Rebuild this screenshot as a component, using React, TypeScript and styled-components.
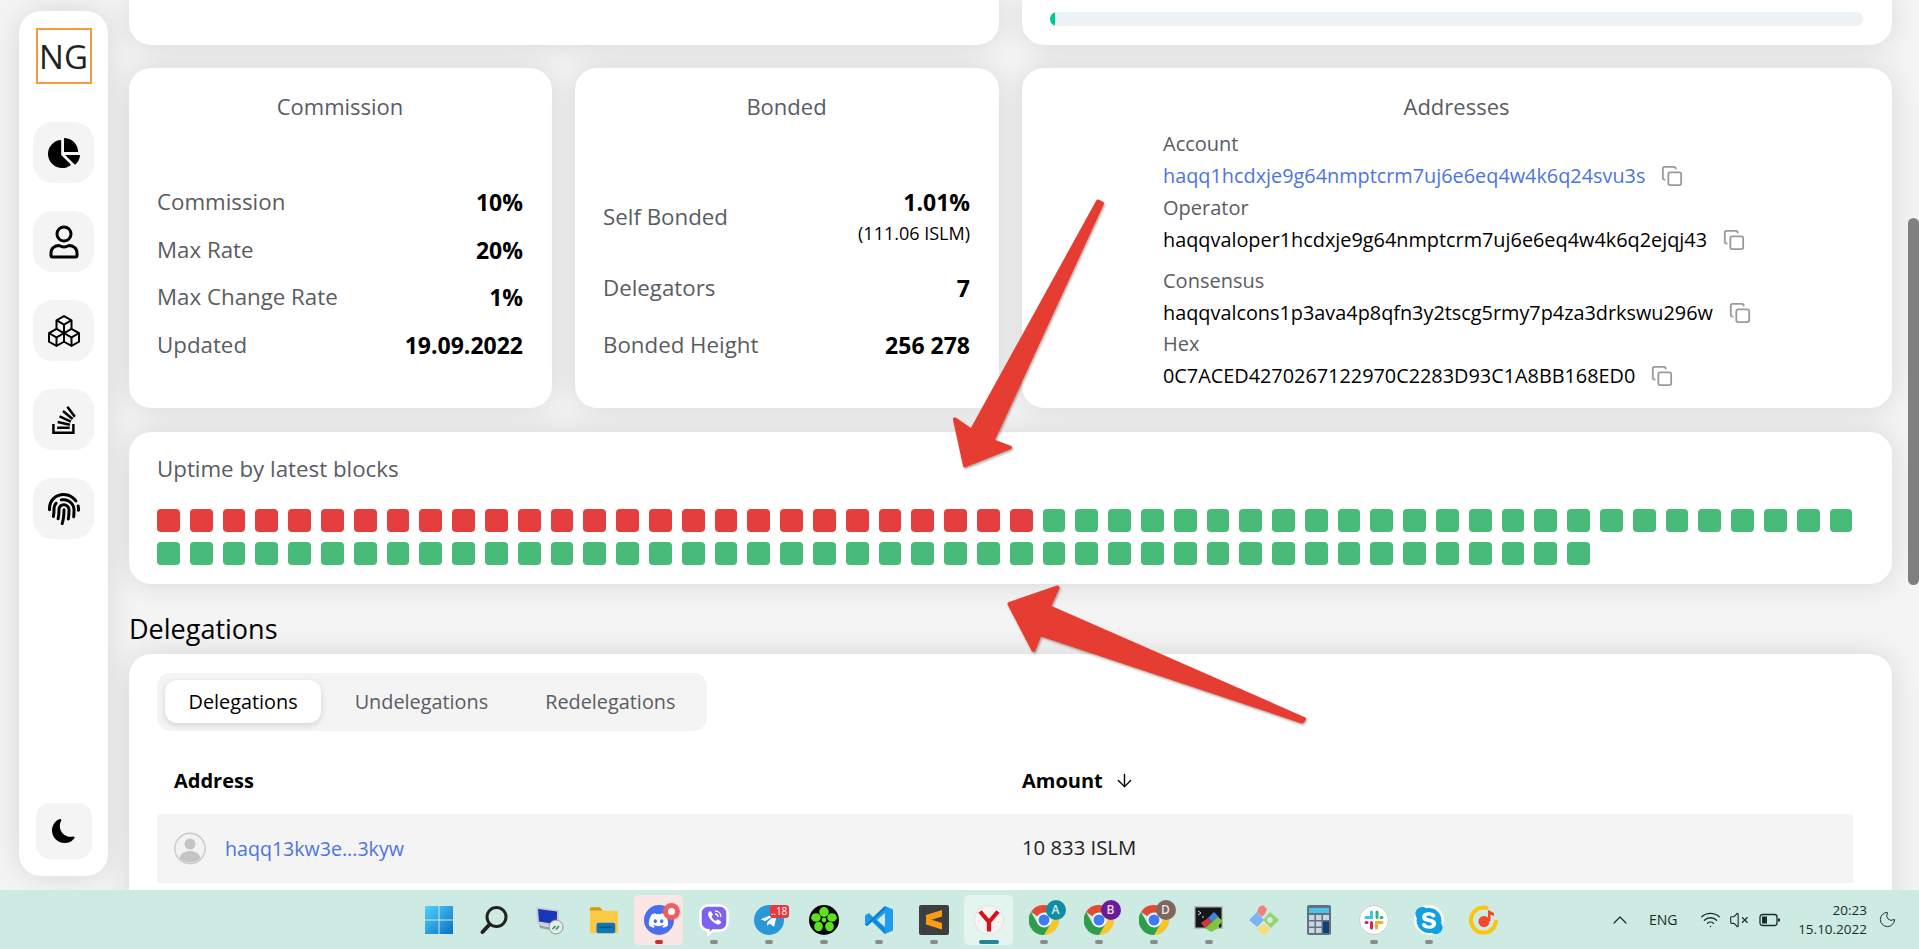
import React from "react";
import styled, { createGlobalStyle } from "styled-components";
import { FaChartPie, FaFingerprint, FaStackOverflow, FaDiscord, FaTelegramPlane, FaSkype } from "react-icons/fa";
import { BsBoxes, BsMoonFill } from "react-icons/bs";
import { ArrowDown, ChevronUp, Copy, Wifi, VolumeX, Moon } from "lucide-react";

const Global = createGlobalStyle`
  html, body { margin: 0; padding: 0; height: 949px; overflow: hidden; background: #f4f4f4; }
  * { box-sizing: border-box; }
  body { font-family: "Open Sans", "Noto Sans", sans-serif; }
`;

const Page = styled.div`
  position: relative;
  width: 1919px;
  height: 949px;
  display: flex;
  flex-direction: column;
  overflow: hidden;
`;
const Main = styled.main`
  display: flex;
  height: 890px;
  overflow: hidden;
  flex: none;
`;
const Sidebar = styled.nav`
  width: 89px;
  height: 865px;
  margin: 11px 0 0 19px;
  padding: 17px 0;
  background: #fff;
  border-radius: 22px;
  box-shadow: 0 0 30px rgba(0, 0, 0, 0.12);
  display: flex;
  flex-direction: column;
  align-items: center;
  flex: none;
`;
const Logo = styled.div`
  width: 56px;
  height: 56px;
  border: 2px solid #f49a3c;
  display: flex;
  align-items: center;
  justify-content: center;
  font-size: 33px;
  font-weight: 500;
  color: #222;
  margin-bottom: 38px;
`;
const NavList = styled.div`
  display: flex;
  flex-direction: column;
  gap: 28px;
`;
const NavButton = styled.div`
  width: 61px;
  height: 61px;
  border-radius: 20px;
  background: #f4f4f4;
  color: #000;
  display: flex;
  align-items: center;
  justify-content: center;
`;
const ThemeButton = styled.div`
  margin-top: auto;
  width: 56px;
  height: 56px;
  border-radius: 14px;
  background: #f4f4f4;
  color: #000;
  display: flex;
  align-items: center;
  justify-content: center;
`;
const Content = styled.div`
  width: 1763px;
  margin-left: 21px;
  flex: none;
  display: flex;
  flex-direction: column;
  & > * {
    flex: none;
  }
`;
const Card = styled.section`
  background: #fff;
  border-radius: 22px;
  box-shadow: 0 0 30px rgba(0, 0, 0, 0.12);
`;
const TopRow = styled.div`
  display: grid;
  grid-template-columns: 870px 870px;
  gap: 23px;
  height: 45px;
  margin-bottom: 23px;
`;
const TopCard = styled(Card)`
  border-radius: 0 0 22px 22px;
  padding: 12px 29px 0 28px;
`;
const Track = styled.div`
  height: 14px;
  border-radius: 7px;
  background: #edf2f7;
  overflow: hidden;
`;
const Fill = styled.div`
  height: 100%;
  background: #00c78f;
  border-radius: 7px 0 0 7px;
`;
const StatsRow = styled.div`
  display: grid;
  grid-template-columns: 423px 424px 870px;
  gap: 23px;
  height: 340px;
  margin-bottom: 24px;
`;
const StatCard = styled(Card)`
  padding: 24px 29px 0 28px;
`;
const CardTitle = styled.h3`
  margin: 0;
  font-size: 22px;
  font-weight: 400;
  line-height: 28px;
  color: #5a5c63;
  text-align: center;
`;
const StatList = styled.div<{ $gap: number }>`
  margin-top: 68px;
  display: flex;
  flex-direction: column;
  gap: ${(p) => p.$gap}px;
`;
const StatRow = styled.div`
  display: flex;
  justify-content: space-between;
  align-items: center;
`;
const StatLabel = styled.span`
  font-size: 22.3px;
  line-height: 28px;
  color: #5a5c63;
`;
const StatValue = styled.div`
  font-size: 23px;
  line-height: 28px;
  font-weight: 700;
  color: #000;
  text-align: right;
`;
const StatSub = styled.div`
  font-size: 18px;
  line-height: 24px;
  margin-top: 5px;
  font-weight: 400;
`;
const AddressList = styled.div`
  margin-top: 10px;
  padding-left: 113px;
`;
const AddressGroup = styled.div<{ $gap: number }>`
  margin-bottom: ${(p) => p.$gap}px;
`;
const AddressLabel = styled.div`
  font-size: 20px;
  line-height: 28px;
  color: #5a5c63;
`;
const AddressValue = styled.div<{ $link?: boolean }>`
  display: flex;
  align-items: center;
  gap: 16px;
  margin-top: 4px;
  font-size: 19.85px;
  line-height: 28px;
  color: ${(p) => (p.$link ? "#4c74e0" : "#000")};
`;
const CopyIcon = styled(Copy)`
  color: #9a9a9a;
  flex: none;
`;
const UptimeCard = styled(Card)`
  padding: 23px 28px 19px;
`;
const UptimeTitle = styled.div`
  font-size: 22.3px;
  line-height: 28px;
  color: #5a5c63;
  margin-bottom: 26px;
`;
const Blocks = styled.div`
  display: flex;
  flex-wrap: wrap;
  row-gap: 10px;
  width: 1710px;
`;
const Block = styled.div<{ $bad?: boolean }>`
  width: 22.8px;
  height: 23px;
  margin-right: 10px;
  border-radius: 4px;
  background: ${(p) => (p.$bad ? "#e53e3e" : "#48bb78")};
`;
const Heading = styled.h2`
  margin: 27px 0 7px;
  font-size: 27px;
  font-weight: 400;
  line-height: 36px;
  color: #000;
`;
const DelegationCard = styled(Card)`
  padding: 19px 39px 0 28px;
  border-radius: 22px 22px 0 0;
  height: 260px;
`;
const Tabs = styled.div`
  display: inline-flex;
  gap: 10px;
  height: 58px;
  padding: 7px 8px;
  border-radius: 14px;
  background: #f4f4f4;
`;
const Tab = styled.div<{ $active?: boolean }>`
  height: 43px;
  padding: 0 23.5px;
  display: flex;
  align-items: center;
  font-size: 19.85px;
  border-radius: 12px;
  color: ${(p) => (p.$active ? "#000" : "#5a5c63")};
  background: ${(p) => (p.$active ? "#fff" : "transparent")};
  box-shadow: ${(p) => (p.$active ? "0 2px 6px rgba(0,0,0,.14)" : "none")};
`;
const TableGrid = styled.div`
  display: grid;
  grid-template-columns: 865px 1fr;
  align-items: center;
`;
const TableHead = styled(TableGrid)`
  margin-top: 35px;
  height: 28px;
  margin-bottom: 20px;
  padding-left: 17px;
  font-size: 20px;
  font-weight: 700;
  color: #000;
`;
const AddressHead = styled.div``;
const AmountHead = styled.div`
  display: flex;
  align-items: center;
  gap: 11px;
  margin-left: -17px;
`;
const TableRow = styled(TableGrid)`
  height: 69px;
  background: #f4f4f4;
  font-size: 20.3px;
  padding-left: 17px;
`;
const PersonCell = styled.div`
  display: flex;
  align-items: center;
  gap: 19px;
  color: #4c74e0;
  font-size: 19.6px;
`;
const AmountCell = styled.div`
  color: #222;
  margin-left: -17px;
  margin-top: -4px;
`;

/* Taskbar */
const Taskbar = styled.footer`
  height: 59px;
  background: #cdebe2;
  display: flex;
  align-items: flex-start;
  padding-left: 411px;
  flex: none;
`;
const Slot = styled.div<{ $bg?: string }>`
  position: relative;
  width: 55px;
  height: 59px;
  padding-top: 15px;
  display: flex;
  flex-direction: column;
  align-items: center;
  &::before {
    content: "";
    display: ${(p) => (p.$bg ? "block" : "none")};
    position: absolute;
    left: 3px;
    top: 5px;
    width: 49px;
    height: 50px;
    border-radius: 5px;
    background: ${(p) => p.$bg};
  }
`;
const SlotIcon = styled.div`
  position: relative;
  width: 30px;
  height: 30px;
  display: flex;
  align-items: center;
  justify-content: center;
`;
const Indicator = styled.div<{ $color?: string; $wide?: boolean }>`
  position: relative;
  width: ${(p) => (p.$wide ? 20 : 8)}px;
  height: 4px;
  margin-top: 5px;
  border-radius: 2px;
  background: ${(p) => p.$color || "#868c8a"};
`;
const RoundBadge = styled.div`
  position: absolute;
  right: -6px;
  top: -2px;
  width: 17px;
  height: 17px;
  border-radius: 50%;
  background: #ef5f5f;
  display: flex;
  align-items: center;
  justify-content: center;
  &::after {
    content: "";
    width: 7px;
    height: 7px;
    border-radius: 50%;
    background: #fff;
  }
`;
const CountBadge = styled.div`
  position: absolute;
  left: 16px;
  top: 0;
  width: 19px;
  height: 13px;
  border-radius: 3px;
  background: #e8373d;
  color: #fff;
  font-size: 10px;
  line-height: 13px;
  text-align: center;
  white-space: nowrap;
`;
const LetterBadge = styled.div<{ $color: string }>`
  position: absolute;
  right: -7px;
  top: -5px;
  width: 20px;
  height: 20px;
  border-radius: 50%;
  background: ${(p) => p.$color};
  color: rgba(255, 255, 255, 0.85);
  font-size: 12px;
  font-weight: 600;
  line-height: 20px;
  text-align: center;
`;
const Disc = styled.div<{ $bg: string; $color: string }>`
  width: 30px;
  height: 30px;
  border-radius: 50%;
  background: ${(p) => p.$bg};
  color: ${(p) => p.$color};
  display: flex;
  align-items: center;
  justify-content: center;
`;
const Tray = styled.div`
  display: flex;
  align-items: center;
  height: 59px;
  margin-left: 97px;
  color: #1c2a27;
`;
const TrayBox = styled.div<{ $ml: number }>`
  width: 24px;
  display: flex;
  justify-content: center;
  margin-left: ${(p) => p.$ml}px;
`;
const TrayLang = styled.div`
  margin-left: 17px;
  font-size: 14px;
  width: 28px;
  white-space: nowrap;
`;
const Clock = styled.div`
  margin-left: 15px;
  width: 70px;
  text-align: right;
  font-size: 13.5px;
  line-height: 19px;
  white-space: nowrap;
`;
const Overlay = styled.svg`
  position: absolute;
  left: 0;
  top: 0;
  pointer-events: none;
`;
const ScrollThumb = styled.div`
  position: absolute;
  right: 0;
  top: 218px;
  width: 11px;
  height: 367px;
  border-radius: 6px;
  background: #808080;
`;

const UserGlyph = () => (
  <svg width="32" height="34" viewBox="0 0 32 34" fill="none" stroke="#000" strokeWidth="3">
    <circle cx="16" cy="9" r="7" />
    <path d="M3 28c0-5 4-7.500 8-7.500 2 1 3 1.500 5 1.500s3-.5 5-1.500c4 0 8 2.500 8 7.500v2.500a1.500 1.500 0 0 1-1.500 1.500h-23A1.500 1.500 0 0 1 3 30.500z" strokeLinejoin="round" />
  </svg>
);

const Avatar = () => (
  <svg width="32" height="33" viewBox="0 0 32 33">
    <circle cx="16" cy="16.500" r="15.200" fill="#f2f2f2" stroke="#c9c9c9" strokeWidth="1.400" />
    <circle cx="16" cy="12" r="5.500" fill="#c4c4c4" />
    <path d="M5.500 26c1.500-5 5.500-7 10.500-7s9 2 10.500 7c-2.500 3-6 4.500-10.500 4.500S8 29 5.500 26z" fill="#c4c4c4" />
  </svg>
);

const WindowsIcon = () => (
  <svg width="30" height="30" viewBox="0 0 30 30">
    <defs>
      <linearGradient id="win" x1="0" y1="0" x2="1" y2="1">
        <stop offset="0" stopColor="#4fd3fb" />
        <stop offset="1" stopColor="#0b6fc4" />
      </linearGradient>
    </defs>
    <path d="M1 1h13.500v13.500H1zM15.500 1H29v13.500H15.500zM1 15.500h13.500V29H1zM15.500 15.500H29V29H15.500z" fill="url(#win)" />
  </svg>
);
const SearchIcon = () => (
  <svg width="30" height="30" viewBox="0 0 30 30" fill="none" stroke="#222" strokeLinecap="round">
    <circle cx="17.500" cy="12" r="9.500" strokeWidth="3" />
    <path d="M10.500 19.500L3.500 27" strokeWidth="4" />
  </svg>
);
const RdpIcon = () => (
  <svg width="30" height="30" viewBox="0 0 30 30">
    <path d="M2 2l23 3v18L3 19z" fill="#c9ccd0" />
    <path d="M4 4l19 2.500v13L5 16.500z" fill="#1a36b8" />
    <path d="M5 20l17 4v2L6 23z" fill="#9aa0a8" />
    <circle cx="22" cy="22" r="7" fill="#e9ebe8" stroke="#8e9496" />
    <path d="M18.500 24l3-3M22 24.500l3-3.500" stroke="#1e9a55" strokeWidth="1.600" />
  </svg>
);
const FolderIcon = () => (
  <svg width="32" height="30" viewBox="0 0 32 30">
    <path d="M1 3a1.500 1.500 0 0 1 1.500-1.500h9L15 5h-14z" fill="#d59b14" />
    <path d="M1 5h29a1 1 0 0 1 1 1v22a1 1 0 0 1-1 1H2a1 1 0 0 1-1-1z" fill="#fcca47" />
    <rect x="8" y="18" width="20" height="11" rx="2" fill="#0f77b8" />
    <rect x="11" y="22" width="14" height="1.500" fill="#0b4f85" />
  </svg>
);
const ViberIcon = () => (
  <svg width="30" height="32" viewBox="0 0 30 32">
    <path d="M9 1.500h12a7.500 7.500 0 0 1 7.500 7.500v10a7.500 7.500 0 0 1-7.500 7.500h-7l-4.500 4v-4.300A7.500 7.500 0 0 1 1.500 19V9A7.500 7.500 0 0 1 9 1.500z" fill="#7b63ef" stroke="#fff" strokeWidth="2.500" />
    <path d="M10 8c1-1 2-.8 2.600.2l1 1.800c.4.700.2 1.300-.6 1.900-.5.400-.4.800-.1 1.400.8 1.500 1.800 2.500 3.300 3.300.6.300 1 .3 1.400-.2.600-.8 1.200-1 1.900-.6l1.800 1.100c1 .6 1.100 1.600.2 2.600-1 1-2.300 1.300-3.700.7-3.900-1.700-6.700-4.400-8.400-8.400-.6-1.400-.4-2.800.6-3.800z" fill="#fff" />
    <path d="M16 7c3.500 0 6 2.500 6 6M16 10c1.800 0 3 1.200 3 3" fill="none" stroke="#fff" strokeWidth="1.300" />
  </svg>
);
const IcqIcon = () => (
  <svg width="30" height="30" viewBox="0 0 30 30">
    <circle cx="15" cy="15" r="15" fill="#050505" />
    <g fill="#5ee01f">
      <ellipse cx="15" cy="7" rx="4.800" ry="5" />
      <ellipse cx="23" cy="12.500" rx="4.800" ry="4.300" />
      <ellipse cx="20.500" cy="21.500" rx="4.300" ry="4.800" />
      <ellipse cx="9.500" cy="21.500" rx="4.300" ry="4.800" />
      <ellipse cx="7" cy="12.500" rx="4.800" ry="4.300" />
      <circle cx="15" cy="15" r="2.400" />
    </g>
  </svg>
);
const VsCodeIcon = () => (
  <svg width="30" height="30" viewBox="0 0 30 30">
    <path d="M21 1l8 3.500v21L21 29 8 17l-5 4-2-1.500v-9L3 9l5 4z" fill="#1f9cf0" />
    <path d="M21 8l-8 7 8 7z" fill="#cdebe2" />
    <path d="M21 1L3 18.500l-2 1 2 1.500L21 4z" fill="#0e72c2" opacity=".9" />
    <path d="M3 9l18 20 0-5L5 8z" fill="#0e7fd0" opacity=".8" />
  </svg>
);
const SublimeIcon = () => (
  <svg width="30" height="30" viewBox="0 0 30 30">
    <rect width="30" height="30" rx="2" fill="#3e3e3e" />
    <path d="M23 5v6.500L7 16.500V10zM7 13l16 5v6.500L7 19.500z" fill="#fb9a14" />
  </svg>
);
const YandexIcon = () => (
  <svg width="30" height="30" viewBox="0 0 30 30">
    <circle cx="15" cy="15" r="14.500" fill="#f7f3f3" stroke="#dfe0e0" />
    <path d="M6 6.500l9 10.500v9.500M24 6.500L15 17" fill="none" stroke="#d8101c" strokeWidth="4.200" />
  </svg>
);
const ChromeIcon = () => (
  <svg width="30" height="30" viewBox="0 0 30 30">
    <path d="M15 0a15 15 0 0 1 13 7.500H15a7.500 7.500 0 0 0-6.500 3.700L2 7A15 15 0 0 1 15 0z" fill="#e14a35" />
    <path d="M28 7.500a15 15 0 0 1-13 22.500l6.500-11.200a7.500 7.500 0 0 0 0-11.300z" fill="#f8c52c" />
    <path d="M2 7l6.500 11.300A7.500 7.500 0 0 0 21.500 19L15 30A15 15 0 0 1 2 7z" fill="#2f9d49" />
    <circle cx="15" cy="15" r="7" fill="#fff" />
    <circle cx="15" cy="15" r="5.500" fill="#3d7cf0" />
  </svg>
);
const TerminalIcon = () => (
  <svg width="30" height="30" viewBox="0 0 30 30">
    <rect x="0" y="1" width="29" height="23" fill="#b9bcbd" />
    <rect x="1.500" y="2.500" width="26" height="20" fill="#141619" />
    <path d="M4 6l3 2-3 2" fill="none" stroke="#ddd" />
    <path d="M8 12h2" stroke="#ddd" />
    <path d="M7 18l7-5 4 4-7 6z" fill="#d8343e" />
    <path d="M14 13l6-6 5 5-6 6z" fill="#3f82e0" />
    <path d="M18 17l6-5 5 4-4 4 0 3-8 4-6-4z" fill="#7ec341" />
  </svg>
);
const GitIcon = () => (
  <svg width="30" height="32" viewBox="0 0 30 32">
    <path d="M10 3l4-2 4 4-2 5-3 3-5-5z" fill="#ee8080" />
    <path d="M8 8l7 8-7 7-8-7z" fill="#7db3f5" />
    <path d="M21 8l9 8-8 8-8-8z" fill="#94d56b" />
    <path d="M15 19l6 6-6 7-7-7z" fill="#f7dd7c" />
    <circle cx="21" cy="16" r="3" fill="#cdebe2" />
  </svg>
);
const CalcIcon = () => (
  <svg width="24" height="30" viewBox="0 0 24 30">
    <rect width="24" height="30" rx="2" fill="#5f7183" />
    <rect x="2" y="3" width="20" height="5" fill="#4cc4e8" />
    <g fill="#cdd6de">
      <rect x="2" y="10" width="5.500" height="5" />
      <rect x="9" y="10" width="5.500" height="5" />
      <rect x="16" y="10" width="6" height="5" />
      <rect x="2" y="16.500" width="5.500" height="5" />
      <rect x="9" y="16.500" width="5.500" height="5" />
      <rect x="2" y="23" width="5.500" height="5" />
      <rect x="9" y="23" width="5.500" height="5" />
    </g>
    <rect x="16" y="16.500" width="6" height="11.500" fill="#0e3f78" />
  </svg>
);
const SlackIcon = () => (
  <svg width="30" height="30" viewBox="0 0 30 30" fill="none" strokeLinecap="round" strokeWidth="3">
    <circle cx="15" cy="15" r="14.500" fill="#fff" stroke="#c7cfcb" strokeWidth="1" />
    <path d="M12.500 7v5.500H7" stroke="#36c5f0" />
    <path d="M18 7v5.500M23 12.500h-1" stroke="#2eb67d" />
    <path d="M17.500 23v-5.500H23" stroke="#ecb22e" />
    <path d="M12.500 23v-5.500M7 17.500h1" stroke="#e01e5a" />
  </svg>
);
const MusicIcon = () => (
  <svg width="30" height="30" viewBox="0 0 30 30" fill="none">
    <path d="M19 3.500A12.500 12.500 0 1 0 27 15" stroke="#fcc40a" strokeWidth="4" />
    <circle cx="15" cy="16.500" r="5.500" fill="#f4482b" />
    <path d="M19 16V5l6 3v3l-3.500-1.500V16z" fill="#f4482b" />
  </svg>
);

type Item = { node: React.ReactNode; ind?: boolean; color?: string; wide?: boolean; bg?: string };
const taskItems: Item[] = [
  { node: <WindowsIcon /> },
  { node: <SearchIcon /> },
  { node: <RdpIcon /> },
  { node: <FolderIcon /> },
  {
    node: (
      <>
        <Disc $bg="#4a6ef0" $color="#fff"><FaDiscord size={21} /></Disc>
        <RoundBadge />
      </>
    ),
    ind: true,
    color: "#c62f2a",
    bg: "#fbe6e6",
  },
  { node: <ViberIcon />, ind: true },
  {
    node: (
      <>
        <Disc $bg="#2a97d6" $color="#fff"><FaTelegramPlane size={18} /></Disc>
        <CountBadge>..18</CountBadge>
      </>
    ),
    ind: true,
  },
  { node: <IcqIcon />, ind: true },
  { node: <VsCodeIcon />, ind: true },
  { node: <SublimeIcon />, ind: true },
  { node: <YandexIcon />, ind: true, color: "#23859b", wide: true, bg: "#e4f5f0" },
  { node: <><ChromeIcon /><LetterBadge $color="#0f8ea3">A</LetterBadge></>, ind: true },
  { node: <><ChromeIcon /><LetterBadge $color="#6a1b9a">B</LetterBadge></>, ind: true },
  { node: <><ChromeIcon /><LetterBadge $color="#7d675f">D</LetterBadge></>, ind: true },
  { node: <TerminalIcon />, ind: true },
  { node: <GitIcon /> },
  { node: <CalcIcon /> },
  { node: <SlackIcon />, ind: true },
  { node: <Disc $bg="#fff" $color="#0f9fe3"><FaSkype size={31} /></Disc>, ind: true },
  { node: <MusicIcon /> },
];

const pct = 0.6;
const BAD = 27;
const TOTAL = 96;

export default function App() {
  return (
    <Page>
      <Global />
      <Main>
        <Sidebar>
          <Logo>NG</Logo>
          <NavList>
            <NavButton><FaChartPie size={32} /></NavButton>
            <NavButton><UserGlyph /></NavButton>
            <NavButton><BsBoxes size={32} /></NavButton>
            <NavButton><FaStackOverflow size={32} /></NavButton>
            <NavButton><FaFingerprint size={32} /></NavButton>
          </NavList>
          <ThemeButton><BsMoonFill size={24} /></ThemeButton>
        </Sidebar>
        <Content>
          <TopRow>
            <TopCard />
            <TopCard>
              <Track>
                <Fill style={{ width: `${pct}%` }} />
              </Track>
            </TopCard>
          </TopRow>
          <StatsRow>
            <StatCard>
              <CardTitle>Commission</CardTitle>
              <StatList $gap={19.67}>
                <StatRow><StatLabel>Commission</StatLabel><StatValue>10%</StatValue></StatRow>
                <StatRow><StatLabel>Max Rate</StatLabel><StatValue>20%</StatValue></StatRow>
                <StatRow><StatLabel>Max Change Rate</StatLabel><StatValue>1%</StatValue></StatRow>
                <StatRow><StatLabel>Updated</StatLabel><StatValue>19.09.2022</StatValue></StatRow>
              </StatList>
            </StatCard>
            <StatCard>
              <CardTitle>Bonded</CardTitle>
              <StatList $gap={29}>
                <StatRow>
                  <StatLabel>Self Bonded</StatLabel>
                  <StatValue>1.01%<StatSub>(111.06 ISLM)</StatSub></StatValue>
                </StatRow>
                <StatRow><StatLabel>Delegators</StatLabel><StatValue>7</StatValue></StatRow>
                <StatRow><StatLabel>Bonded Height</StatLabel><StatValue>256 278</StatValue></StatRow>
              </StatList>
            </StatCard>
            <StatCard>
              <CardTitle>Addresses</CardTitle>
              <AddressList>
                <AddressGroup $gap={4}>
                  <AddressLabel>Account</AddressLabel>
                  <AddressValue $link>haqq1hcdxje9g64nmptcrm7uj6e6eq4w4k6q24svu3s<CopyIcon size={22} /></AddressValue>
                </AddressGroup>
                <AddressGroup $gap={13}>
                  <AddressLabel>Operator</AddressLabel>
                  <AddressValue>haqqvaloper1hcdxje9g64nmptcrm7uj6e6eq4w4k6q2ejqj43<CopyIcon size={22} /></AddressValue>
                </AddressGroup>
                <AddressGroup $gap={3}>
                  <AddressLabel>Consensus</AddressLabel>
                  <AddressValue>haqqvalcons1p3ava4p8qfn3y2tscg5rmy7p4za3drkswu296w<CopyIcon size={22} /></AddressValue>
                </AddressGroup>
                <AddressGroup $gap={0}>
                  <AddressLabel>Hex</AddressLabel>
                  <AddressValue>0C7ACED4270267122970C2283D93C1A8BB168ED0<CopyIcon size={22} /></AddressValue>
                </AddressGroup>
              </AddressList>
            </StatCard>
          </StatsRow>
          <UptimeCard>
            <UptimeTitle>Uptime by latest blocks</UptimeTitle>
            <Blocks>
              {Array.from({ length: TOTAL }, (_, i) => (
                <Block key={i} $bad={i < BAD} />
              ))}
            </Blocks>
          </UptimeCard>
          <Heading>Delegations</Heading>
          <DelegationCard>
            <Tabs>
              <Tab $active>Delegations</Tab>
              <Tab>Undelegations</Tab>
              <Tab>Redelegations</Tab>
            </Tabs>
            <TableHead>
              <AddressHead>Address</AddressHead>
              <AmountHead>Amount<ArrowDown size={21} strokeWidth={1.6} /></AmountHead>
            </TableHead>
            <TableRow>
              <PersonCell><Avatar />haqq13kw3e...3kyw</PersonCell>
              <AmountCell>10 833 ISLM</AmountCell>
            </TableRow>
          </DelegationCard>
        </Content>
      </Main>
      <Taskbar>
        {taskItems.map((it, i) => (
          <Slot key={i} $bg={it.bg}>
            <SlotIcon>{it.node}</SlotIcon>
            {it.ind && <Indicator $color={it.color} $wide={it.wide} />}
          </Slot>
        ))}
        <Tray>
          <TrayBox $ml={0}><ChevronUp size={24} strokeWidth={1.2} /></TrayBox>
          <TrayLang>ENG</TrayLang>
          <TrayBox $ml={21}><Wifi size={21} strokeWidth={1.5} /></TrayBox>
          <TrayBox $ml={5}><VolumeX size={20} strokeWidth={1.3} /></TrayBox>
          <TrayBox $ml={7}>
            <svg width="22" height="14" viewBox="0 0 22 14" fill="none" stroke="#1c2a27" strokeWidth="1.300">
              <rect x="1" y="1.500" width="17" height="11" rx="2.500" />
              <rect x="3" y="3.500" width="5" height="7" fill="#1c2a27" stroke="none" />
              <path d="M20 5.500v3" strokeWidth="2" />
            </svg>
          </TrayBox>
          <Clock>20:23<br />15.10.2022</Clock>
          <TrayBox $ml={8}><Moon size={19} strokeWidth={1.2} /></TrayBox>
        </Tray>
      </Taskbar>
      <ScrollThumb />
      <Overlay width="1919" height="949" viewBox="0 0 1919 949">
        <defs>
          <filter id="arrowShadow" x="-10%" y="-10%" width="120%" height="120%">
            <feDropShadow dx="1" dy="1.500" stdDeviation="0.800" floodColor="#000" floodOpacity="0.35" />
          </filter>
        </defs>
        <g fill="#e63c30" stroke="#e63c30" strokeWidth="4" strokeLinejoin="round" filter="url(#arrowShadow)">
          <path d="M1098 201.500L1102 203.500L992.500 441L1010 447.500L965 465.500L955 419.500L971.500 431z" />
          <path d="M1304 719L1302 721.500L1040 634L1033.500 650L1009.500 604L1057.500 587.500L1049 607z" />
        </g>
      </Overlay>
    </Page>
  );
}
